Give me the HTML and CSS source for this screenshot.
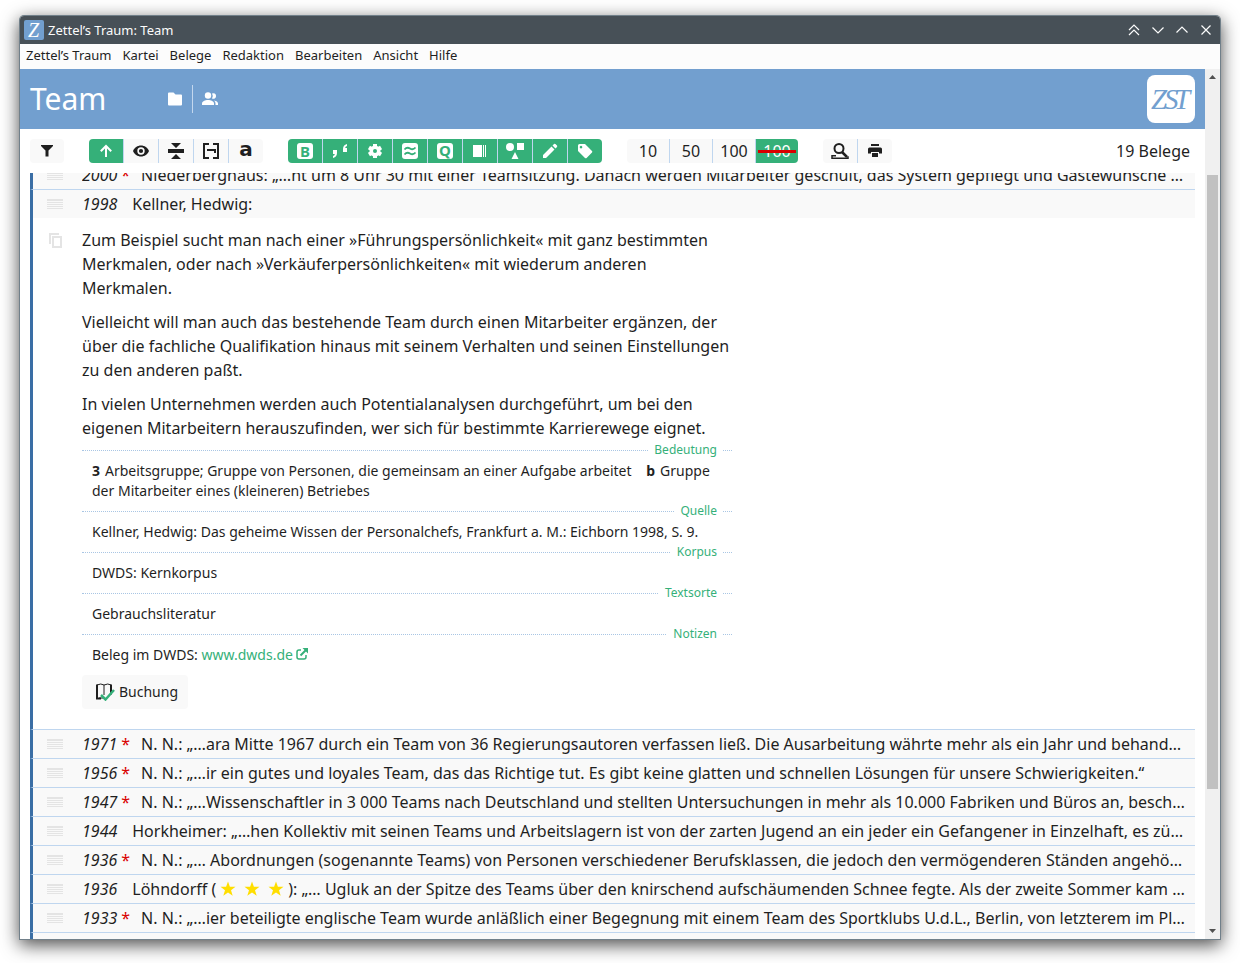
FILE: index.html
```html
<!DOCTYPE html>
<html lang="de">
<head>
<meta charset="utf-8">
<title>Zettel’s Traum: Team</title>
<link rel="stylesheet" href="styles.css">
</head>
<body>
<svg class="defs" width="0" height="0" aria-hidden="true">
  <symbol id="handle" viewBox="0 0 16 10"><path fill="currentColor" d="M0 0h16v2H0zM0 3h16v1H0zM0 5h16v1H0zM0 7h16v1H0zM0 9h16v1H0z"/></symbol>
  <symbol id="star" viewBox="0 0 16 16"><path fill="#ffde00" d="M8 0.5l1.900 5.300h5.600l-4.500 3.500 1.700 5.500L8 11.500l-4.700 3.300L5 9.300 0.500 5.800h5.600z"/></symbol>
</svg>
<div class="window">
  <div class="titlebar">
    <svg class="app-icon" viewBox="0 0 20 20" aria-hidden="true"><rect width="20" height="20" rx="2" fill="#729fcf"/><text x="4" y="16.500" class="mark mark-small">Z</text></svg>
    <span class="caption">Zettel’s Traum: Team</span>
    <div class="controls">
      <button aria-label="Oben halten"><svg viewBox="0 0 12 12"><path d="M1 6l5-5 5 5M1 11l5-5 5 5"/></svg></button>
      <button aria-label="Minimieren"><svg viewBox="0 0 12 12"><path d="M.5 3.500L6 9l5.500-5.500"/></svg></button>
      <button aria-label="Maximieren"><svg viewBox="0 0 12 12"><path d="M.5 8.500L6 3l5.500 5.500"/></svg></button>
      <button aria-label="Schließen"><svg viewBox="0 0 12 12"><path d="M1.500 1.500l9 9M10.500 1.500l-9 9"/></svg></button>
    </div>
  </div>
  <nav class="menubar">
    <button>Zettel’s Traum</button><button>Kartei</button><button>Belege</button><button>Redaktion</button><button>Bearbeiten</button><button>Ansicht</button><button>Hilfe</button>
  </nav>
  <div class="content">
    <main class="page">
      <header class="header">
        <h1>Team</h1>
        <div class="header-tools">
          <button aria-label="Kartei öffnen"><svg viewBox="0 0 16 16"><path fill="#fff" d="M2 1.500h4.500l2 2H14a1 1 0 0 1 1 1v9a1 1 0 0 1-1 1H2a1 1 0 0 1-1-1V2.500a1 1 0 0 1 1-1z"/></svg></button>
          <button aria-label="Redaktion"><svg viewBox="0 0 16 16"><g fill="#fff"><circle cx="6" cy="4.500" r="3.200"/><path d="M0 14v-1.500C0 10.300 3 9 6 9s6 1.300 6 3.500V14z"/><path d="M10 2.500A2.800 2.800 0 1 1 10 7.500a4.500 4.500 0 0 0 0-5zM12 9.500c2.300.3 4 1.500 4 3V14h-2.500v-1.500c0-1.200-.6-2.200-1.500-3z"/></g></svg></button>
        </div>
        <svg class="logo" viewBox="0 0 48 48" role="img" aria-label="Zettel’s Traum"><rect width="48" height="48" rx="8" fill="#fff"/><g class="mark mark-big"><text x="4" y="34">Z</text><text x="17" y="34">S</text><text x="27" y="34">T</text></g></svg>
      </header>
      <div class="toolbar">
        <div class="group"><button aria-label="Filter"><svg viewBox="0 0 16 16"><path fill="#1f1f1f" d="M2 2h12v1L9.500 7.500v6h-3v-6L2 3z"/></svg></button></div>
        <div class="group">
          <button class="on" aria-label="Aufsteigend"><svg viewBox="0 0 16 16"><path fill="none" stroke="#fff" stroke-width="2" d="M8 14V4M2.800 8.200L8 3l5.200 5.200"/></svg></button>
          <button aria-label="Ansehen"><svg viewBox="0 0 16 16"><path fill="#1f1f1f" d="M8 2.500c-3.600 0-6.600 2.200-8 5.500 1.400 3.300 4.400 5.500 8 5.500s6.600-2.200 8-5.500c-1.400-3.300-4.400-5.500-8-5.500z"/><circle cx="8" cy="8" r="2.900" fill="none" stroke="#f9f9f9" stroke-width="1.600"/></svg></button>
          <button aria-label="Zuklappen"><svg viewBox="0 0 16 16"><path fill="#1f1f1f" d="M0 6h16v4H0zM3 0h10L8 5zM3 16h10l-5-5z"/></svg></button>
          <button aria-label="Kürzen"><svg viewBox="0 0 16 16"><path fill="none" stroke="#1f1f1f" stroke-width="2" d="M6 1H1v14h5M10 1h5v14h-5M4 7h8v3"/></svg></button>
          <button aria-label="Wort"><svg viewBox="0 0 16 16"><text class="word" x="8" y="13">a</text></svg></button>
        </div>
        <div class="group green">
          <button aria-label="Bedeutung"><svg viewBox="0 0 16 16"><rect width="16" height="16" rx="3" fill="#fff"/><text class="badge" x="8" y="13.500">B</text></svg></button>
          <button aria-label="Zitat"><svg viewBox="0 0 16 16"><path fill="#fff" d="M1 7h4v3q0 4-4 5v-2q1.800-.5 1.800-2H1zM15 9h-4V6q0-4 4-5v2q-1.800.5-1.800 2H15z"/></svg></button>
          <button aria-label="Einstellungen"><svg viewBox="0 0 16 16"><g fill="#fff"><path d="M6 1h4v14H6z"/><path d="M6 1h4v14H6z" transform="rotate(60 8 8)"/><path d="M6 1h4v14H6z" transform="rotate(120 8 8)"/><circle cx="8" cy="8" r="5.500"/></g><circle cx="8" cy="8" r="2" fill="#35b079"/></svg></button>
          <button aria-label="Korpus"><svg viewBox="0 0 16 16"><rect width="16" height="16" rx="3" fill="#fff"/><path fill="none" stroke="#35b079" stroke-width="1.800" d="M2.500 6.500q2.500-3 5.500-1t5.500-1M2.500 11.500q2.500-3 5.500-1t5.500-1"/></svg></button>
          <button aria-label="Quelle"><svg viewBox="0 0 16 16"><rect width="16" height="16" rx="3" fill="#fff"/><text class="badge" x="8" y="13">Q</text></svg></button>
          <button aria-label="Buchung"><svg viewBox="0 0 16 16"><path fill="#fff" d="M1 2h9v12H1zM11 2h1v12h-1zM13 2h1v12h-1z"/></svg></button>
          <button aria-label="Textsorte"><svg class="shapes" viewBox="0 0 20 18"><circle cx="5" cy="5" r="4" fill="#fff"/><path fill="#fff" d="M12 1h7v7h-7zM10 10l3.500 7h-7z"/></svg></button>
          <button aria-label="Notizen"><svg viewBox="0 0 16 16"><path fill="#fff" d="M1 12l8.500-8.500 3 3L4 15H1zM10.500 2.500L12 1q.7-.5 1.400 0L15 2.600q.5.700 0 1.400l-1.500 1.500z"/></svg></button>
          <button aria-label="Tags"><svg viewBox="0 0 16 16"><path fill="#fff" fill-rule="evenodd" d="M1 2.500Q1 1 2.500 1H8l7 7q.7.800 0 1.600L9.600 15q-.8.700-1.600 0L1 8zM4 2.800a1.300 1.300 0 1 0 .01 0z"/></svg></button>
        </div>
        <div class="group counts">
          <button>10</button><button>50</button><button>100</button><button class="on struck">100</button>
        </div>
        <div class="group">
          <button aria-label="Suchen"><svg class="wide" viewBox="0 0 18 16"><g fill="none" stroke="#1f1f1f"><circle cx="8" cy="5.500" r="4.500" stroke-width="2"/><path stroke-width="2.500" d="M11 9l5 5"/><path stroke-width="1.500" d="M5 12.800H1v2.400h16v-2"/></g></svg></button>
          <button aria-label="Drucken"><svg viewBox="0 0 16 16"><path fill="#1f1f1f" d="M4 1h8v2H4zM2.500 4.500h11q1.500 0 1.500 1.500v4.500h-3V9H4v1.500H1V6q0-1.500 1.500-1.500zM5 10h6v4H5z"/></svg></button>
        </div>
        <span class="total">19 Belege</span>
      </div>
      <section class="list">
        <div class="entries">
          <article class="entry"><div class="row"><svg class="handle"><use href="#handle"/></svg><p><i>2000</i><b class="new">*</b>Niederberghaus: „…ht um 8 Uhr 30 mit einer Teamsitzung. Danach werden Mitarbeiter geschult, das System gepflegt und Gästewünsche …</p></div></article>
          <article class="entry">
            <div class="row"><svg class="handle"><use href="#handle"/></svg><p><i>1998</i>Kellner, Hedwig:</p></div>
            <div class="detail">
              <button class="copy" aria-label="Kopieren"><svg viewBox="0 0 14 16"><path fill="none" stroke="#e4e4e4" stroke-width="2" d="M2 11V1h9M5 4h8v10H5z"/></svg></button>
              <div class="text">
                <p>Zum Beispiel sucht man nach einer »Führungspersönlichkeit« mit ganz bestimmten Merkmalen, oder nach »Verkäuferpersönlichkeiten« mit wiederum anderen Merkmalen.</p>
                <p>Vielleicht will man auch das bestehende Team durch einen Mitarbeiter ergänzen, der über die fachliche Qualifikation hinaus mit seinem Verhalten und seinen Einstellungen zu den anderen paßt.</p>
                <p>In vielen Unternehmen werden auch Potentialanalysen durchgeführt, um bei den eigenen Mitarbeitern herauszufinden, wer sich für bestimmte Karrierewege eignet.</p>
                <div class="meta"><h2>Bedeutung</h2><b class="first">3</b>Arbeitsgruppe; Gruppe von Personen, die gemeinsam an einer Aufgabe arbeitet <b class="sub">b</b>Gruppe der Mitarbeiter eines (kleineren) Betriebes</div>
                <div class="meta"><h2>Quelle</h2>Kellner, Hedwig: Das geheime Wissen der Personalchefs, Frankfurt a. M.: Eichborn 1998, S. 9.</div>
                <div class="meta"><h2>Korpus</h2>DWDS: Kernkorpus</div>
                <div class="meta"><h2>Textsorte</h2>Gebrauchsliteratur</div>
                <div class="meta"><h2>Notizen</h2>Beleg im DWDS: <a href="#dwds">www.dwds.de<svg viewBox="0 0 12 12"><path fill="none" stroke="#35b079" stroke-width="1.500" d="M5 2H3Q1 2 1 4v5q0 2 2 2h5q2 0 2-2V7"/><path fill="none" stroke="#35b079" stroke-width="2" d="M4.500 7.500L10 2"/><path fill="#35b079" d="M6.500 0H12v5.500z"/></svg></a></div>
                <button class="booking"><svg viewBox="0 0 20 18"><path fill="none" stroke="#1f1f1f" stroke-width="2" d="M2 1.500v14h4M16 1.500v10"/><path fill="none" stroke="#1f1f1f" d="M2 2q4-2 7 0v10M9 2q4-2 7 0M8 15H4"/><path fill="none" stroke="#35b079" stroke-width="2.500" d="M6 12l4.500 4.500L19 7"/></svg>Buchung</button>
              </div>
            </div>
          </article>
          <article class="entry"><div class="row"><svg class="handle"><use href="#handle"/></svg><p><i>1971</i><b class="new">*</b>N. N.: „…ara Mitte 1967 durch ein Team von 36 Regierungsautoren verfassen ließ. Die Ausarbeitung währte mehr als ein Jahr und behand…</p></div></article>
          <article class="entry"><div class="row"><svg class="handle"><use href="#handle"/></svg><p><i>1956</i><b class="new">*</b>N. N.: „…ir ein gutes und loyales Team, das das Richtige tut. Es gibt keine glatten und schnellen Lösungen für unsere Schwierigkeiten.“</p></div></article>
          <article class="entry"><div class="row"><svg class="handle"><use href="#handle"/></svg><p><i>1947</i><b class="new">*</b>N. N.: „…Wissenschaftler in 3 000 Teams nach Deutschland und stellten Untersuchungen in mehr als 10.000 Fabriken und Büros an, besch…</p></div></article>
          <article class="entry"><div class="row"><svg class="handle"><use href="#handle"/></svg><p><i>1944</i>Horkheimer: „…hen Kollektiv mit seinen Teams und Arbeitslagern ist von der zarten Jugend an ein jeder ein Gefangener in Einzelhaft, es zü…</p></div></article>
          <article class="entry"><div class="row"><svg class="handle"><use href="#handle"/></svg><p><i>1936</i><b class="new">*</b>N. N.: „… Abordnungen (sogenannte Teams) von Personen verschiedener Berufsklassen, die jedoch den vermögenderen Ständen angehö…</p></div></article>
          <article class="entry"><div class="row"><svg class="handle"><use href="#handle"/></svg><p><i>1936</i>Löhndorff (<svg class="star"><use href="#star"/></svg><svg class="star"><use href="#star"/></svg><svg class="star"><use href="#star"/></svg>): „… Ugluk an der Spitze des Teams über den knirschend aufschäumenden Schnee fegte. Als der zweite Sommer kam …</p></div></article>
          <article class="entry"><div class="row"><svg class="handle"><use href="#handle"/></svg><p><i>1933</i><b class="new">*</b>N. N.: „…ier beteiligte englische Team wurde anläßlich einer Begegnung mit einem Team des Sportklubs U.d.L., Berlin, von letzterem im Pl…</p></div></article>
          <article class="entry"><div class="row"></div></article>
        </div>
      </section>
    </main>
    <div class="scrollbar" aria-hidden="true">
      <svg class="arrow" viewBox="0 0 15 15"><path fill="#505050" d="M4 10l3.500-4L11 10z"/></svg>
      <div class="before"></div><div class="thumb"></div><div class="after"></div>
      <svg class="arrow" viewBox="0 0 15 15"><path fill="#505050" d="M4 5l3.500 4L11 5z"/></svg>
    </div>
  </div>
</div>
</body>
</html>
```
FILE: styles.css
```css
* { box-sizing: border-box; }
body {
  margin: 0;
  background: #fff;
  color: #1f1f1f;
  font: 16px/24px "Noto Sans", sans-serif;
}
button {
  border: 0;
  padding: 0;
  background: none;
  color: inherit;
  font: inherit;
}
h1, h2, p { margin: 0; font-weight: 400; }
svg { display: block; }
.defs { position: absolute; }

.window {
  display: flex;
  flex-direction: column;
  height: calc(100vh - 40px);
  margin: 16px 20px 24px;
  border-radius: 4px 4px 0 0;
  background: #fff;
  box-shadow: 0 0 0 1px #71808a, 0 5px 18px 1px rgba(0, 0, 0, .7);
}

.titlebar {
  display: flex;
  align-items: center;
  flex: none;
  height: 28px;
  padding: 0 2px 0 4px;
  border-radius: 4px 4px 0 0;
  background: #475057;
  color: #fcfcfc;
  font-size: 13px;
}
.app-icon { width: 20px; height: 20px; margin-right: 4px; }
.controls { display: flex; margin-left: auto; }
.controls button { display: grid; place-items: center; width: 24px; height: 24px; }
.controls svg { width: 12px; height: 12px; fill: none; stroke: #fcfcfc; stroke-width: 1.2; }

.mark { font-family: "Liberation Serif", serif; font-style: italic; }
.mark-small { font-size: 20px; fill: #fff; }
.mark-big { font-size: 29px; fill: #729fcf; }

.menubar {
  display: flex;
  gap: 11px;
  flex: none;
  height: 25px;
  padding: 0 6px 2px;
  background: #fcfcfc;
  font-size: 13px;
  line-height: 23px;
}

.content { display: flex; flex: 1; min-height: 0; }
.page { display: flex; flex: 1; flex-direction: column; min-width: 0; }

.header {
  display: flex;
  align-items: center;
  flex: none;
  height: 60px;
  padding: 0 10px;
  background: #729fcf;
  color: #fff;
}
.header h1 { font-size: 30px; line-height: 40px; }
.header-tools { display: flex; margin-left: 52px; }
.header-tools button { display: grid; place-items: center; width: 34px; height: 28px; }
.header-tools button + button { width: 35px; border-left: 1px solid #c3d7ee; }
.header-tools svg { width: 16px; height: 16px; }
.logo { width: 48px; height: 48px; margin-left: auto; }

.toolbar {
  display: flex;
  align-items: center;
  gap: 25px;
  flex: none;
  height: 44px;
  padding: 0 15px 0 10px;
}
.group { display: flex; overflow: hidden; border-radius: 4px; background: #f9f9f9; }
.group button { display: grid; place-items: center; width: 34px; height: 24px; }
.group button + button { width: 35px; border-left: 1px solid #bfd6ef; }
.group svg { width: 16px; height: 16px; }
.group svg.wide { width: 18px; }
.group svg.shapes { width: 20px; height: 18px; }
.group.green, .group .on { background: #35b079; }
.badge { fill: #35b079; font: 700 15px "Noto Sans", sans-serif; text-anchor: middle; }
.word { fill: #1f1f1f; font: 700 20px "DejaVu Sans", sans-serif; text-anchor: middle; }
.group.counts button { width: 42px; }
.group.counts button + button { width: 43px; }
.group .struck {
  background: linear-gradient(#d90000, #d90000) center / 38px 3px no-repeat, #35b079;
  color: #fff;
  text-decoration: line-through 3px #d90000;
}
.total { margin-left: auto; }

.list { flex: 1; min-height: 0; overflow: hidden; padding: 0 10px; }
.entries { margin-top: -12px; }
.entry { border-left: 3px solid #3a6ea5; border-bottom: 1px solid #bfd6ef; }
.row, .detail {
  display: grid;
  grid-template-columns: 44px minmax(0, 1fr);
  column-gap: 5px;
}
.row { align-items: center; height: 28px; background: #f9f9f9; }
.row p { overflow: hidden; white-space: nowrap; text-overflow: ellipsis; }
.row i { margin-right: 15px; }
.handle { justify-self: center; width: 16px; height: 10px; color: #e4e4e4; }
.new { margin: 0 11px 0 -11px; color: #d90000; font-weight: 400; }
.star { display: inline-block; width: 16px; height: 16px; margin: 0 4px; vertical-align: -2px; }

.detail { padding: 10px 0 20px; }
.copy { align-self: start; justify-self: center; padding: 5px 0; }
.copy svg { width: 14px; height: 16px; }
.text { max-width: 650px; }
.text p { margin-bottom: 10px; }
.meta {
  position: relative;
  padding: 10px;
  border-top: 1px dotted #a9c6e4;
  font-size: 14px;
  line-height: 20px;
}
.meta h2 {
  position: absolute;
  top: -11px;
  right: 9px;
  padding: 0 6px;
  background: #fff;
  color: #35b079;
  font-size: 12px;
}
.meta b { margin-right: 5px; }
.meta .sub { margin-left: 11px; }
.meta a { color: #35b079; text-decoration: none; }
.meta a svg { display: inline-block; width: 12px; height: 12px; margin-left: 3px; }
.booking {
  display: flex;
  align-items: center;
  gap: 4px;
  height: 34px;
  padding: 0 10px 0 13px;
  border-radius: 4px;
  background: #f9f9f9;
  font-size: 14px;
}
.booking svg { width: 20px; height: 18px; }

.scrollbar { display: flex; flex: none; flex-direction: column; width: 15px; background: #f0f0f0; }
.arrow { flex: none; width: 15px; height: 15px; }
.before { flex: 91; }
.thumb { flex: 614; margin: 0 2px; background: #c1c1c1; }
.after { flex: 135; }
```
